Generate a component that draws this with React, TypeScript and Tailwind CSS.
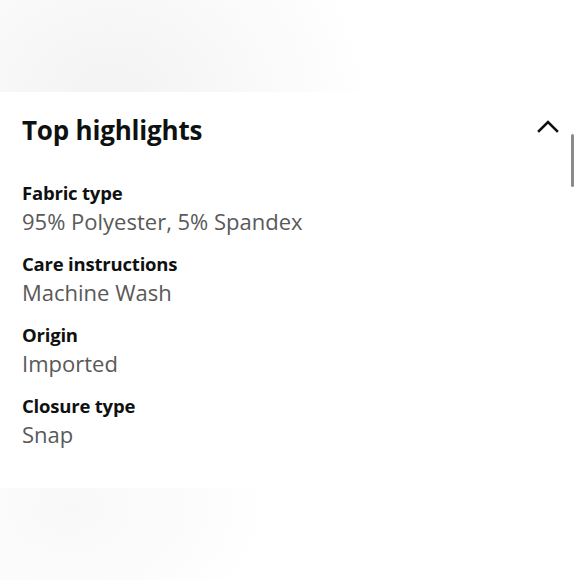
import React from "react"

type Highlight = { label: string; value: string }

const highlights: Highlight[] = [
  { label: "Fabric type", value: "95% Polyester, 5% Spandex" },
  { label: "Care instructions", value: "Machine Wash" },
  { label: "Origin", value: "Imported" },
  { label: "Closure type", value: "Snap" },
]

export default function App() {
  return (
    <div
      className="w-[580px] h-[580px] overflow-hidden flex flex-col bg-white"
      style={{ fontFamily: '"Open Sans", "Noto Sans", Arial, sans-serif' }}
    >
      {/* faded image strip above */}
      <div className="h-[92px] shrink-0 bg-[radial-gradient(ellipse_260px_220px_at_110px_100px,#f3f3f3_0%,#f9f9f9_55%,#ffffff_100%)]" />

      {/* panel */}
      <div className="relative flex flex-col h-[396px] shrink-0 px-[22px] pt-[22px]">
        <div className="flex items-center justify-between">
          <h2 className="text-[26px] leading-[32px] font-bold text-[#0f1111] tracking-[-0.2px]">Top highlights</h2>
          <svg className="mr-[-1px] mt-[-8px]" width="22" height="14" viewBox="0 0 22 14" fill="none">
            <path d="M2 12 L11 3 L20 12" stroke="#0f1111" strokeWidth="2.6" strokeLinecap="square" />
          </svg>
        </div>

        <div className="flex flex-col gap-[13px] mt-[33px]">
          {highlights.map(h => (
            <div key={h.label} className="flex flex-col">
              <span className="text-[18.5px] leading-[27px] font-bold text-[#0f1111] tracking-[-0.2px]">{h.label}</span>
              <span className="text-[22px] leading-[31px] text-[#595959]">{h.value}</span>
            </div>
          ))}
        </div>

        {/* scroll indicator */}
        <div className="absolute right-[6px] top-[42px] w-[3px] h-[53px] rounded-full bg-[#8a8a8a]" />
      </div>

      {/* faded image strip below */}
      <div className="flex-1 bg-[radial-gradient(ellipse_200px_140px_at_70px_20px,#f8f8f8_0%,#fcfcfc_60%,#ffffff_100%)]" />
    </div>
  )
}
